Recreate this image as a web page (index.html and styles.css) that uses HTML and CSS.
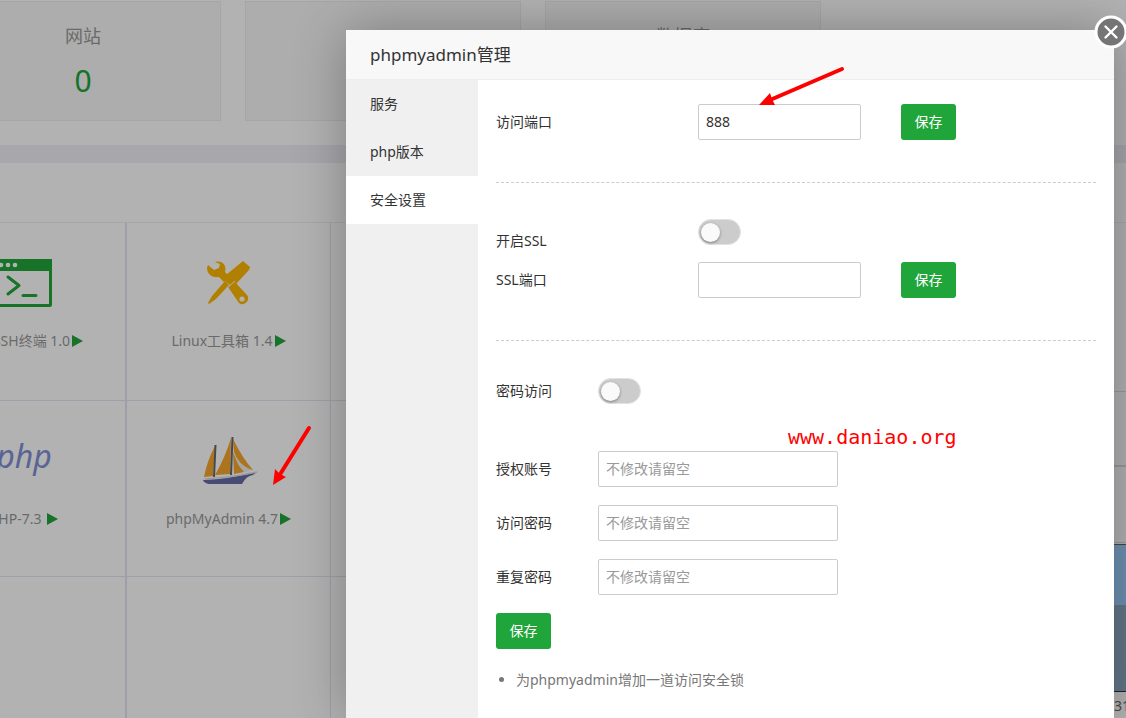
FILE: index.html
```html
<!DOCTYPE html>
<html lang="zh-CN">
<head>
<meta charset="utf-8">
<title>phpmyadmin管理</title>
<link rel="stylesheet" href="styles.css">
</head>
<body>
<div class="page">
  <section class="stats">
    <div class="stat"><span class="stat-name">网站</span><a class="stat-value" href="#">0</a></div>
    <div class="stat"><span class="stat-name">FTP</span></div>
    <div class="stat"><span class="stat-name">数据库</span></div>
  </section>
  <div class="panels">
    <section class="panel">
      <div class="panel-head"></div>
      <div class="apps">
        <div class="app">
          <svg class="app-icon" viewBox="0 0 60 60"><rect x="3.500" y="7.500" width="53" height="45" rx="1" fill="none" stroke="#20a53a" stroke-width="3"/><path d="M2 6h56v12H2z" fill="#20a53a"/><g fill="#fff"><circle cx="7" cy="12" r="2.300"/><circle cx="14" cy="12" r="2.300"/><circle cx="21" cy="12" r="2.300"/></g><path d="M14 24l11 8.500-11 8.500M29 42.500h13" fill="none" stroke="#20a53a" stroke-width="3" stroke-linecap="round" stroke-linejoin="round"/></svg>
          <span class="app-name">宝塔SSH终端 1.0<svg class="run" viewBox="0 0 11 12"><path d="M0 0l11 6-11 6z"/></svg></span>
        </div>
        <div class="app">
          <svg class="app-icon" viewBox="0 0 60 60"><g fill="#ffb800"><path d="M16 9c7-2 12 3 10 10l5 5-6 5-5-5c-7 1-12-3-12-9l1-3 6 5 5-2 1-4z"/><path d="M29 34l6-6 13 14c4 5-3 12-8 8z"/><path d="M44 8l7 6-1 3-13 14-6 1-5-4 1-6z"/><path d="M26 28l4 4-13 14-7 5-1-1 4-7z"/></g><path d="M28 35l8-7" stroke="#fff"/><circle cx="43" cy="46" r="2.600" fill="#fff"/></svg>
          <span class="app-name">Linux工具箱 1.4<svg class="run" viewBox="0 0 11 12"><path d="M0 0l11 6-11 6z"/></svg></span>
        </div>
        <div class="app"></div>
        <div class="app">
          <div class="app-icon php-logo">php</div>
          <span class="app-name">PHP-7.3 <svg class="run" viewBox="0 0 11 12"><path d="M0 0l11 6-11 6z"/></svg></span>
        </div>
        <div class="app">
          <svg class="app-icon" viewBox="0 0 60 60"><g fill="#f6a62c"><path d="M16 15q-8 15-11 31l9-1z"/><path d="M32 7q-6 20-16 37l15-1z"/><path d="M34 8q10 20 20 31l-5-1q-11-6-14-17z"/><path d="M34 21q4 11 11 20l-10 2z"/></g><path d="M34 19q5 15 19 20l-7 2q-8-5-11-20" fill="#eee"/><path d="M16.500 14L15 46M33.500 6L32 44" stroke="#66686d" stroke-width="2"/><path d="M4 49q27-1 54-8l-4 3q-7 1-11 9H10q-5-1-6-4z" fill="#686ca6"/><path d="M6 48q28-2 52-7" fill="none" stroke="#ddd" stroke-width="1.500"/></svg>
          <span class="app-name">phpMyAdmin 4.7<svg class="run" viewBox="0 0 11 12"><path d="M0 0l11 6-11 6z"/></svg></span>
        </div>
        <div class="app"></div>
        <div class="app"></div><div class="app"></div><div class="app"></div>
      </div>
    </section>
    <section class="panel">
      <div class="panel-head"></div>
      <div class="traffic">
        <div class="traffic-tabs"></div>
        <div class="traffic-info"></div>
        <div class="traffic-top"></div>
        <div class="area-up"></div>
        <div class="area-down"></div>
        <div class="axis">:31</div>
      </div>
    </section>
  </div>
</div>
<div class="shade"></div>
<div class="dialog" role="dialog" aria-labelledby="dialog-title">
  <h1 class="dialog-title" id="dialog-title">phpmyadmin管理</h1>
  <button class="close" type="button" aria-label="关闭"><svg viewBox="0 0 34 34"><circle cx="17" cy="17" r="15" fill="#757575" stroke="#fff" stroke-width="3"/><path d="M11.500 11.500l11 11m0-11l-11 11" stroke="#fff" stroke-width="2.400" stroke-linecap="round"/></svg></button>
  <div class="dialog-body">
    <nav class="menu">
      <a href="#">服务</a>
      <a href="#">php版本</a>
      <a class="active" href="#">安全设置</a>
    </nav>
    <form class="settings">
      <div class="group">
        <div class="row wide"><label for="port">访问端口</label><input class="field port" id="port" type="text" value="888"><button class="save" type="button">保存</button></div>
      </div>
      <div class="group">
        <div class="row wide ssl"><label for="ssl">开启SSL</label><input class="switch" id="ssl" type="checkbox"></div>
        <div class="row wide"><label for="ssl-port">SSL端口</label><input class="field port" id="ssl-port" type="text"><button class="save" type="button">保存</button></div>
      </div>
      <div class="auth">
        <div class="row access"><label for="auth">密码访问</label><input class="switch" id="auth" type="checkbox"></div>
        <div class="row"><label for="user">授权账号</label><input class="field" id="user" type="text" placeholder="不修改请留空"></div>
        <div class="row"><label for="pass">访问密码</label><input class="field" id="pass" type="password" placeholder="不修改请留空"></div>
        <div class="row"><label for="again">重复密码</label><input class="field" id="again" type="password" placeholder="不修改请留空"></div>
        <button class="save" type="button">保存</button>
      </div>
      <ul class="notes"><li>为phpmyadmin增加一道访问安全锁</li></ul>
    </form>
  </div>
</div>
<svg class="marks" width="1126" height="718" viewBox="0 0 1126 718" aria-hidden="true">
  <g stroke="#f00" stroke-width="4" stroke-linecap="round"><path d="M842 69L770 100"/><path d="M309 428L279 476"/></g>
  <g fill="#f00"><path d="M759 105l11-12 2 6 3 6z"/><path d="M273 485l2-16 5 5 6 3z"/></g>
</svg>
<div class="watermark">www.daniao.org</div>
</body>
</html>
```
FILE: styles.css
```css
* { box-sizing: border-box; }

body {
  margin: 0;
  height: 100vh;
  overflow: hidden;
  position: relative;
  background: #fff;
  color: #333;
  font: 14px/20px "Noto Sans", "Noto Sans CJK SC", sans-serif;
}

a { color: inherit; text-decoration: none; }
input, button { font: inherit; color: inherit; }

.page { height: 100%; overflow: hidden; }

.stats {
  display: grid;
  grid-template-columns: repeat(4, 1fr);
  gap: 24px;
  margin-left: -55px;
  padding: 1px 5px 24px 0;
}

.stat {
  display: flex;
  flex-direction: column;
  align-items: center;
  gap: 12px;
  height: 120px;
  padding-top: 21px;
  background: #f8f8f8;
  border: 1px solid #eee;
}

.stat-name { font-size: 18px; line-height: 26px; color: #999; }
.stat-value { font-size: 30px; line-height: 40px; color: #20a53a; }

.panels {
  display: grid;
  grid-template-columns: 534px 1fr;
  border-top: 18px solid #efeff7;
}

.panel-head { height: 60px; border-bottom: 1px solid #eee; }

.apps {
  display: grid;
  grid-template-columns: repeat(3, 204px);
  grid-template-rows: 178px 176px 178px;
  margin-left: -77px;
}

.app {
  display: flex;
  flex-direction: column;
  align-items: center;
  gap: 18px;
  padding-top: 30px;
  border-right: 1px solid #e6e4f2;
  border-bottom: 1px solid #e6e4f2;
}

.app:nth-child(3n + 1) { border-right-width: 2px; }
.app-icon { width: 60px; height: 60px; }
.app-name { color: #999; white-space: pre; }
.run { width: 11px; height: 12px; margin-left: 2px; fill: #20a53a; vertical-align: -1px; }

.php-logo {
  display: flex;
  justify-content: center;
  color: #828fd6;
  font-size: 32px;
  font-style: italic;
  line-height: 50px;
}

.traffic { display: flex; flex-direction: column; }
.traffic-tabs { height: 169px; border-bottom: 1px solid #ddd; }
.traffic-info { height: 75px; border-bottom: 2px solid #ddd; }
.traffic-top { height: 76px; border-bottom: 1px solid #ddd; }
.area-up { height: 61px; margin-top: 1px; background: #9fd2ff; border-top: 1px solid #666; }
.area-down { height: 86px; background: #8eacc6; }

.axis {
  display: flex;
  justify-content: flex-end;
  padding-top: 4px;
  margin-right: -4px;
  border-top: 1px solid #333;
  color: #666;
}

.shade { position: absolute; inset: 0; background: rgba(0, 0, 0, 0.3); }

.dialog {
  position: absolute;
  top: 30px;
  left: 346px;
  right: 12px;
  bottom: 0;
  display: flex;
  flex-direction: column;
  background: #fff;
  box-shadow: 1px 1px 50px rgba(0, 0, 0, 0.3);
}

.dialog-title {
  margin: 0;
  padding: 1px 24px 0;
  font-size: 17px;
  font-weight: 400;
  line-height: 48px;
  background: #f8f8f8;
  border-bottom: 1px solid #eee;
}

.close {
  position: absolute;
  top: -15px;
  right: -14px;
  width: 34px;
  height: 34px;
  padding: 0;
  border: 0;
  background: none;
}

.close svg { display: block; }
.dialog-body { display: flex; flex: 1; }

.menu { width: 132px; background: #f0f0f0; }
.menu a { display: block; padding: 0 24px; line-height: 48px; }
.menu .active { background: #fff; }

.settings { flex: 1; padding: 24px 18px 0; }

.group {
  padding-bottom: 42px;
  margin-bottom: 36px;
  border-bottom: 1px dashed #ccc;
}

.row {
  display: grid;
  grid-template-columns: 102px 240px;
  align-items: center;
}

.wide { grid-template-columns: 202px 163px 55px; }
.wide .save { margin-left: 40px; }
.ssl { height: 43px; }
.ssl .switch { align-self: start; }

.field {
  width: 100%;
  height: 36px;
  padding: 0 7px 2px;
  background: #fff;
  border: 1px solid #ccc;
  border-radius: 2px;
}

.field::placeholder { color: #999; opacity: 1; }

.save {
  width: 55px;
  height: 36px;
  padding: 0;
  color: #fff;
  background: #20a53a;
  border: 0;
  border-radius: 3px;
}

.switch {
  appearance: none;
  width: 43px;
  height: 26px;
  margin: 0;
  padding: 3px 2px;
  background: #ccc;
  border: 1px solid #e2e2e2;
  border-radius: 13px;
}

.switch::before {
  content: "";
  display: block;
  width: 19px;
  height: 19px;
  background: #fafafa;
  border-radius: 50%;
  box-shadow: 0 1px 3px rgba(0, 0, 0, 0.4);
}

.auth { display: grid; gap: 18px; }
.access { margin: 1px 0 29px; }

.notes { margin: 21px 0 0; padding-left: 20px; color: #777; }

.marks { position: absolute; top: 0; left: 0; pointer-events: none; }

.watermark {
  position: absolute;
  top: 424px;
  left: 788px;
  color: #f00;
  font: 20px/26px "DejaVu Sans Mono", monospace;
}
```
